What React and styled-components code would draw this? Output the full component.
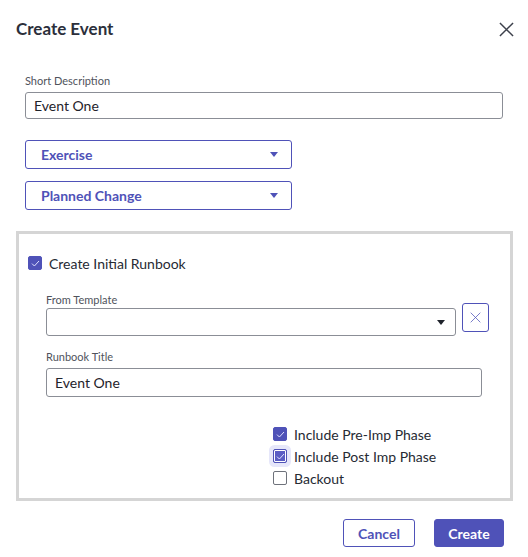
import React from 'react'
import styled, { createGlobalStyle } from 'styled-components';

const purple = '#4f52b8';

const Global = createGlobalStyle`
    html, body {
        margin: 0;
        padding: 0;
        background: #fff;
        font-family: Lato, "Open Sans", sans-serif;
        color: #262a33;
    }
`

const Dialog = styled.div`
    width: 528px;
    height: 557px;
    box-sizing: border-box;
    padding: 16px 16px 0 16px;
`

const Header = styled.div`
    display: flex;
    align-items: center;
    justify-content: space-between;
    height: 26px;
`

const Title = styled.h2`
    margin: 0;
    font-size: 17px;
    line-height: 26px;
    font-weight: 700;
    color: #2b2f3b;
`

const CloseButton = styled.button`
    border: none;
    background: none;
    padding: 0;
    width: 18px;
    height: 18px;
    margin-right: -3px;
    display: flex;
    align-items: center;
    justify-content: center;
    cursor: pointer;
`

const Fields = styled.div`
    padding-left: 9px;
    margin-top: 32px;
`

const Label = styled.label`
    display: block;
    font-size: 11px;
    line-height: 14px;
    color: #4f535c;
`

const TextInput = styled.div`
    box-sizing: border-box;
    margin-top: 4px;
    width: ${p => p.width}px;
    height: ${p => p.height || 27}px;
    border: 1px solid #8b8e96;
    border-radius: 3px;
    display: flex;
    align-items: center;
    padding-left: 8px;
    font-size: 14px;
    color: #1f232b;
`

const Select = styled.div`
    box-sizing: border-box;
    margin-top: ${p => p.top}px;
    width: 267px;
    height: 29px;
    border: 1px solid ${purple};
    border-radius: 3px;
    display: flex;
    align-items: center;
    justify-content: space-between;
    padding: 0 13px 0 15px;
    font-size: 14px;
    font-weight: 700;
    color: ${purple};
`

const Caret = styled.span`
    width: 0;
    height: 0;
    border-left: 4px solid transparent;
    border-right: 4px solid transparent;
    border-top: 5px solid ${p => p.color};
`

const Panel = styled.div`
    margin-top: 21px;
    width: 497px;
    height: 270px;
    box-sizing: border-box;
    border: 3px solid #d5d5d5;
    padding: 18px 0 0 9px;
`

const CheckRow = styled.label`
    display: flex;
    align-items: center;
    gap: 7px;
    height: 22px;
    font-size: 14px;
    color: #262a33;
`

const Box = styled.span`
    position: relative;
    box-sizing: border-box;
    width: 14px;
    height: 14px;
    border-radius: 2px;
    border: 1px solid ${p => (p.checked ? purple : '#6e727b')};
    background: ${p => (p.checked ? purple : '#fff')};
    display: flex;
    align-items: center;
    justify-content: center;
    ${p => p.focused && `
        box-shadow: 0 0 0 1px #fff inset, 0 0 0 4px #e6e7fa;
        border: 1.5px solid ${purple};
        background: #5a5dc4;
    `}
`

const Runbook = styled.div`
    padding-left: 18px;
    margin-top: 19px;
`

const TemplateRow = styled.div`
    display: flex;
    align-items: flex-start;
    gap: 6px;
`

const TemplateSelect = styled.div`
    box-sizing: border-box;
    margin-top: 1px;
    width: 410px;
    height: 28px;
    border: 1px solid #8b8e96;
    border-radius: 3px;
    display: flex;
    align-items: center;
    justify-content: flex-end;
    padding-right: 10px;
`

const ClearButton = styled.button`
    box-sizing: border-box;
    margin-top: -4px;
    width: 27px;
    height: 29px;
    border: 1px solid ${purple};
    border-radius: 3px;
    background: #fff;
    padding: 0;
    display: flex;
    align-items: center;
    justify-content: center;
`

const Spaced = styled.div`
    margin-top: ${p => p.top}px;
`

const CheckList = styled.div`
    margin-top: 26px;
    margin-left: 227px;
    display: flex;
    flex-direction: column;
`

const Footer = styled.div`
    display: flex;
    justify-content: flex-end;
    gap: 19px;
    margin-top: 18px;
    padding-right: 8px;
`

const Button = styled.button`
    box-sizing: border-box;
    height: 28px;
    width: ${p => p.width}px;
    border-radius: 3px;
    border: 1px solid ${purple};
    background: ${p => (p.primary ? purple : '#fff')};
    color: ${p => (p.primary ? '#fff' : purple)};
    font-family: Lato, sans-serif;
    font-size: 14px;
    font-weight: 700;
    padding: 0;
`

const Check = () => (
    <svg width="9" height="7" viewBox="0 0 9 7">
        <path d="M1 3.6 L3.4 6 L8 1" fill="none" stroke="#dfe0ff" strokeWidth="1" />
    </svg>
)

const CheckItem = ({ checked, focused, children }) => (
    <CheckRow>
        <Box checked={checked} focused={focused}>{checked && <Check />}</Box>
        {children}
    </CheckRow>
)

const XIcon = ({ size, color, width }) => (
    <svg width={size} height={size} viewBox="0 0 16 16">
        <path d="M1 1 L15 15 M15 1 L1 15" stroke={color} strokeWidth={width} fill="none" />
    </svg>
)

export default function App() {
    return (
        <>
            <Global />
            <Dialog>
                <Header>
                    <Title>Create Event</Title>
                    <CloseButton><XIcon size={15} color="#3d414c" width={1.6} /></CloseButton>
                </Header>
                <Fields>
                    <Label>Short Description</Label>
                    <TextInput width={478}>Event One</TextInput>
                    <Select top={21}>Exercise<Caret color={purple} /></Select>
                    <Select top={12}>Planned Change<Caret color={purple} /></Select>
                </Fields>
                <Panel>
                    <CheckItem checked>Create Initial Runbook</CheckItem>
                    <Runbook>
                        <Label>From Template</Label>
                        <TemplateRow>
                            <TemplateSelect><Caret color="#1f232b" /></TemplateSelect>
                            <ClearButton><XIcon size={11} color={purple} width={1.1} /></ClearButton>
                        </TemplateRow>
                        <Spaced top={14}>
                            <Label>Runbook Title</Label>
                            <TextInput width={436} height={29}>Event One</TextInput>
                        </Spaced>
                        <CheckList>
                            <CheckItem checked>Include Pre-Imp Phase</CheckItem>
                            <CheckItem checked focused>Include Post Imp Phase</CheckItem>
                            <CheckItem>Backout</CheckItem>
                        </CheckList>
                    </Runbook>
                </Panel>
                <Footer>
                    <Button width={72}>Cancel</Button>
                    <Button primary width={70}>Create</Button>
                </Footer>
            </Dialog>
        </>
    )
}
